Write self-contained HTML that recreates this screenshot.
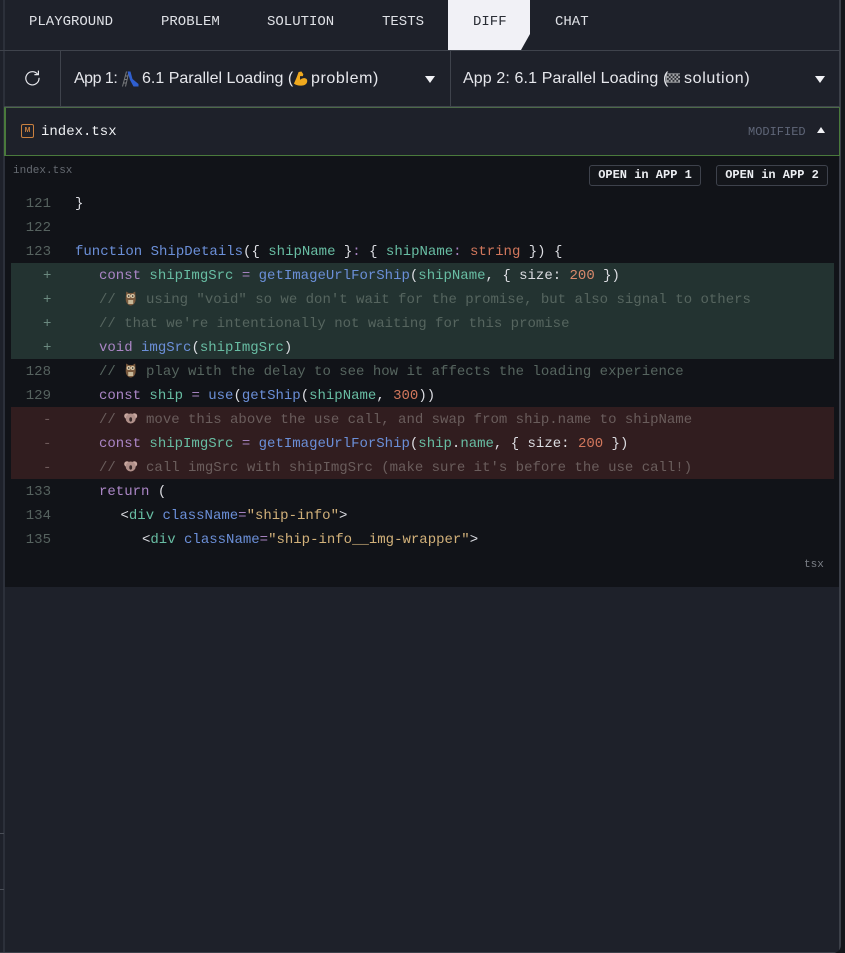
<!DOCTYPE html>
<html><head><meta charset="utf-8"><title>Diff</title>
<style>
*{box-sizing:border-box}
html,body{margin:0;padding:0;width:845px;height:953px;overflow:hidden;background:#14161b}
#app{position:absolute;left:0;top:0;width:841px;height:953px;background:#1e212a;border-bottom-right-radius:8px;overflow:hidden;font-family:"Liberation Mono",monospace}
.a{position:absolute;white-space:pre}
.tab{top:14px;font-size:14px;line-height:16px;color:#dfe1e6}
.s{font-family:"Liberation Sans",sans-serif;font-size:16px;line-height:20px;top:69px;color:#e6e7ec}
.l{height:24px;line-height:26px;font-size:14px;left:75px;color:#dcdde2}
.n{height:24px;line-height:26px;font-size:14px;left:10px;width:41px;text-align:right;color:#56625f}
.p{height:24px;line-height:26px;font-size:14px;left:43px;color:#6b8a80}
.m{height:24px;line-height:26px;font-size:14px;left:43px;color:#6e5a5a}
.k{color:#ab86c6}.f{color:#6b8fd8}.v{color:#68bda3}.c{color:#56655f}.o{color:#d98a6c}.t{color:#d2775c}.q{color:#d2b17a}.b{color:#a582bf}
.cr{color:#6a5d5c}
.e{display:inline-block;width:13.4px;height:16px;vertical-align:-3px}
.btn{top:165px;width:112px;height:21px;border:1px solid #3e424c;border-radius:3px;background:#14161b;color:#eceef2;font-size:12px;font-weight:bold;line-height:19px;text-align:center}
</style></head><body>
<div id="app">
<div class="a" style="left:3px;top:0;width:2px;height:953px;background:#2c303a"></div>
<div class="a" style="left:839px;top:0;width:2px;height:953px;background:#3c4049"></div>
<div class="a" style="left:0;top:50px;width:840px;height:1px;background:#3f434c"></div>
<div class="a tab" style="left:29px">PLAYGROUND</div>
<div class="a tab" style="left:161px">PROBLEM</div>
<div class="a tab" style="left:267px">SOLUTION</div>
<div class="a tab" style="left:382px">TESTS</div>
<div class="a" style="left:448px;top:0;width:82px;height:50px;background:#f1f1f6;clip-path:polygon(0 0,82px 0,82px 34px,73px 50px,0 50px)"></div>
<div class="a tab" style="left:473px;color:#2a2d35">DIFF</div>
<div class="a tab" style="left:555px">CHAT</div>

<div class="a" style="left:60px;top:51px;width:1px;height:56px;background:#3f434c"></div>
<div class="a" style="left:450px;top:51px;width:1px;height:56px;background:#3f434c"></div>
<svg class="a" style="left:24px;top:69px" width="17" height="17" viewBox="0 0 17 17" fill="none" stroke="#e6e7ec" stroke-width="1.2"><path d="M13.6 5.2A6.6 6.6 0 1 0 15 8.8"/><path d="M14.4 1.6V5.6H10.4"/></svg>
<div class="a s" style="left:74px;letter-spacing:-.5px">App 1:</div>
<svg class="a" style="left:122px;top:71px" width="17" height="16" viewBox="0 0 17 16"><path d="M0.500 15.500L4.500 0.500M3.500 15.500L7 0.500M1.500 12H4.500M2.400 8.500H5.400M3.300 5H6.300" stroke="#77797c" stroke-width="1" fill="none"/><path d="M5.500 0.500H8.500L10.500 8L16.500 13V15.500H11.500L8 9Z" fill="#2f5fd0"/></svg>
<div class="a s" style="left:142px">6.1 Parallel Loading (</div>
<svg class="a" style="left:293px;top:70px" width="15" height="17" viewBox="0 0 16 17"><path d="M9 1L6 1.500L4 7L1 14C4 16.500 9 16.500 12 15.500C15 14.500 16 11 14.500 9C12.500 7.500 9.500 8 7.500 10L7.500 6L10.500 6L11 4Z" fill="#f0a91e"/></svg>
<div class="a s" style="left:311px;letter-spacing:.6px">problem)</div>
<svg class="a" style="left:425px;top:76px" width="10" height="7"><path d="M0 0H10L5 7Z" fill="#f1f2f5"/></svg>
<svg class="a" style="left:666px;top:72px" width="14" height="13" viewBox="0 0 15 13"><rect x="0" y="1" width="15" height="10" fill="#a0a2a5"/><path d="M1 2h2v2H1zM5 2h2v2H5zM9 2h2v2H9zM13 2h2v2h-2zM3 4h2v2H3zM7 4h2v2H7zM11 4h2v2h-2zM1 6h2v2H1zM5 6h2v2H5zM9 6h2v2H9zM13 6h2v2h-2zM3 8h2v2H3zM7 8h2v2H7zM11 8h2v2h-2z" fill="#2c2e35"/></svg>
<div class="a s" style="left:463px;letter-spacing:.12px">App 2: 6.1 Parallel Loading (</div>
<div class="a s" style="left:684px;letter-spacing:.65px">solution)</div>
<svg class="a" style="left:815px;top:76px" width="10" height="7"><path d="M0 0H10L5 7Z" fill="#f1f2f5"/></svg>
<div class="a" style="left:4px;top:106px;width:836px;height:1px;background:#3f434c"></div>

<div class="a" style="left:4px;top:107px;width:836px;height:49px;border:1px solid #4a7a3c;border-top-color:#4c6a48;border-left-width:2px"></div>
<div class="a" style="left:21px;top:124px;width:13px;height:14px;border:1px solid #c9803f;border-radius:2px;color:#c9803f;font:bold 7px/12px 'Liberation Sans',sans-serif;text-align:center">M</div>
<div class="a" style="left:41px;top:124px;font-size:14px;line-height:16px;color:#eef0f3">index.tsx</div>
<div class="a" style="left:748px;top:125px;font-size:12px;line-height:14px;color:#5f6678">MODIFIED</div>
<svg class="a" style="left:817px;top:127px" width="8" height="6"><path d="M0 6H8L4 0Z" fill="#f1f2f5"/></svg>

<div class="a" style="left:5px;top:156px;width:834px;height:431px;background:#111318"></div>
<div class="a" style="left:13px;top:164px;font-size:11px;line-height:14px;color:#666b72">index.tsx</div>
<div class="a btn" style="left:589px">OPEN in APP 1</div>
<div class="a btn" style="left:716px">OPEN in APP 2</div>

<div class="a" style="left:11px;top:263px;width:823px;height:96px;background:#233331"></div>
<div class="a" style="left:11px;top:407px;width:823px;height:72px;background:#311d1f"></div>

<div class="a n" style="top:191px">121</div><div class="a l" style="top:191px">}</div>
<div class="a n" style="top:215px">122</div>
<div class="a n" style="top:239px">123</div><div class="a l" style="top:239px"><span class="f">function</span> <span class="f">ShipDetails</span>({ <span class="v">shipName</span> }<span class="b">:</span> { <span class="v">shipName</span><span class="b">:</span> <span class="t">string</span> }) {</div>

<div class="a p" style="top:263px">+</div><div class="a l" style="top:263px;left:99px"><span class="k">const</span> <span class="v">shipImgSrc</span> <span class="b">=</span> <span class="f">getImageUrlForShip</span>(<span class="v">shipName</span>, { size: <span class="o">200</span> })</div>
<div class="a p" style="top:287px">+</div><div class="a l c" style="top:287px;left:99px">// <svg class="e" viewBox="0 0 13 16"><path d="M2 1.500L4.500 3H8.500L11 1.500L11.500 9C11.500 13 9 15.500 6.500 15.500S1.500 13 1.500 9Z" fill="#7a5a3e"/><circle cx="4.500" cy="6" r="2" fill="#d8c8a8"/><circle cx="8.500" cy="6" r="2" fill="#d8c8a8"/><circle cx="4.500" cy="6" r=".8" fill="#222"/><circle cx="8.500" cy="6" r=".8" fill="#222"/><path d="M4 10H9V14H4Z" fill="#c8b898"/></svg> using "void" so we don't wait for the promise, but also signal to others</div>
<div class="a p" style="top:311px">+</div><div class="a l c" style="top:311px;left:99px">// that we're intentionally not waiting for this promise</div>
<div class="a p" style="top:335px">+</div><div class="a l" style="top:335px;left:99px"><span class="k">void</span> <span class="f">imgSrc</span>(<span class="v">shipImgSrc</span>)</div>

<div class="a n" style="top:359px">128</div><div class="a l c" style="top:359px;left:99px">// <svg class="e" viewBox="0 0 13 16"><path d="M2 1.500L4.500 3H8.500L11 1.500L11.500 9C11.500 13 9 15.500 6.500 15.500S1.500 13 1.500 9Z" fill="#7a5a3e"/><circle cx="4.500" cy="6" r="2" fill="#d8c8a8"/><circle cx="8.500" cy="6" r="2" fill="#d8c8a8"/><circle cx="4.500" cy="6" r=".8" fill="#222"/><circle cx="8.500" cy="6" r=".8" fill="#222"/><path d="M4 10H9V14H4Z" fill="#c8b898"/></svg> play with the delay to see how it affects the loading experience</div>
<div class="a n" style="top:383px">129</div><div class="a l" style="top:383px;left:99px"><span class="k">const</span> <span class="v">ship</span> <span class="b">=</span> <span class="f">use</span>(<span class="f">getShip</span>(<span class="v">shipName</span>, <span class="t">300</span>))</div>

<div class="a m" style="top:407px">-</div><div class="a l cr" style="top:407px;left:99px">// <svg class="e" viewBox="0 0 13 16"><circle cx="2.800" cy="6" r="2.800" fill="#c9a8a0"/><circle cx="10.200" cy="6" r="2.800" fill="#c9a8a0"/><circle cx="6.500" cy="8.500" r="5" fill="#b0908a"/><ellipse cx="6.500" cy="9.500" rx="1.400" ry="2.200" fill="#3a2a2a"/></svg> move this above the use call, and swap from ship.name to shipName</div>
<div class="a m" style="top:431px">-</div><div class="a l" style="top:431px;left:99px"><span class="k">const</span> <span class="v">shipImgSrc</span> <span class="b">=</span> <span class="f">getImageUrlForShip</span>(<span class="v">ship</span>.<span class="v">name</span>, { size: <span class="t">200</span> })</div>
<div class="a m" style="top:455px">-</div><div class="a l cr" style="top:455px;left:99px">// <svg class="e" viewBox="0 0 13 16"><circle cx="2.800" cy="6" r="2.800" fill="#c9a8a0"/><circle cx="10.200" cy="6" r="2.800" fill="#c9a8a0"/><circle cx="6.500" cy="8.500" r="5" fill="#b0908a"/><ellipse cx="6.500" cy="9.500" rx="1.400" ry="2.200" fill="#3a2a2a"/></svg> call imgSrc with shipImgSrc (make sure it's before the use call!)</div>

<div class="a n" style="top:479px">133</div><div class="a l" style="top:479px;left:99px"><span class="k">return</span> (</div>
<div class="a n" style="top:503px">134</div><div class="a l" style="top:503px;left:120.500px">&lt;<span class="v">div</span> <span class="f">className</span><span class="b">=</span><span class="q">"ship-info"</span>&gt;</div>
<div class="a n" style="top:527px">135</div><div class="a l" style="top:527px;left:142px">&lt;<span class="v">div</span> <span class="f">className</span><span class="b">=</span><span class="q">"ship-info__img-wrapper"</span>&gt;</div>
<div class="a" style="left:804px;top:558px;font-size:11px;line-height:14px;color:#7c8087">tsx</div>

<div class="a" style="left:0;top:833px;width:4px;height:1px;background:#4a4e57"></div>
<div class="a" style="left:0;top:889px;width:4px;height:1px;background:#4a4e57"></div>
<div class="a" style="left:0;top:952px;width:841px;height:1px;background:#3c4049"></div>
</div>
</body></html>
